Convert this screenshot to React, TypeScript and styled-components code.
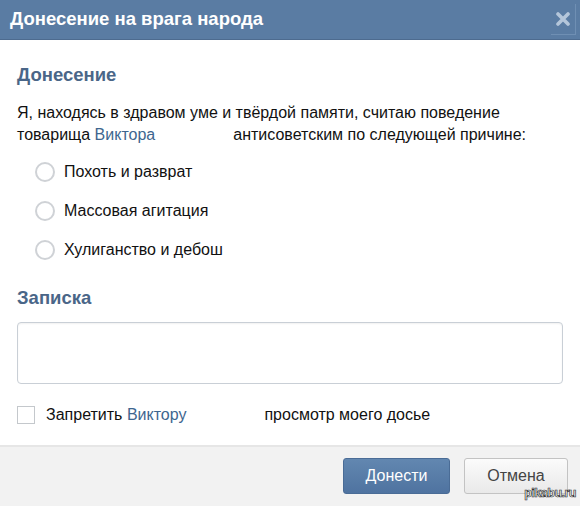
import React from "react";
import styled, { createGlobalStyle } from "styled-components";

const Global = createGlobalStyle`
  html, body { margin: 0; padding: 0; background: #fff; }
  body { font-family: "Liberation Sans", Arial, sans-serif; }
`;

const Dialog = styled.div`
  position: relative;
  width: 580px;
  height: 506px;
  display: flex;
  flex-direction: column;
  background: #fff;
  overflow: hidden;
`;

const Header = styled.div`
  height: 40px;
  box-sizing: border-box;
  background: #5a7ca3;
  border-bottom: 1px solid #4d6b8f;
  display: flex;
  align-items: center;
  justify-content: space-between;
  padding: 0 10px 2px 10px;
`;

const Title = styled.div`
  color: #fff;
  font-size: 18.5px;
  font-weight: bold;
`;

const Close = styled.div`
  width: 24px;
  height: 30px;
  display: flex;
  align-items: center;
  justify-content: center;
  border-bottom: 1px solid #6f8fb3;
  border-right: 1px solid #6f8fb3;
  margin-right: -6px;
  margin-top: 2px;
`;

const Body = styled.div`
  flex: 1;
  padding: 24px 17px 0 17px;
  display: flex;
  flex-direction: column;
`;

const Heading = styled.div<{ $mt?: number }>`
  color: #4a6688;
  font-size: 18.5px;
  font-weight: bold;
  margin-top: ${(p) => p.$mt ?? 0}px;
`;

const Paragraph = styled.div`
  margin-top: 16px;
  font-size: 16px;
  line-height: 22px;
  color: #111;
`;

const Link = styled.span`
  color: #3e668f;
`;

const Redacted = styled.span<{ $w: number }>`
  display: inline-block;
  width: ${(p) => p.$w}px;
`;

const Options = styled.div`
  margin-top: 15px;
  padding-left: 18px;
  display: flex;
  flex-direction: column;
  gap: 17px;
`;

const Option = styled.label`
  display: flex;
  align-items: center;
  gap: 9px;
  font-size: 16px;
  color: #111;
  height: 22px;
`;

const Radio = styled.span`
  width: 20px;
  height: 20px;
  border-radius: 50%;
  border: 2px solid #cfd2d6;
  box-sizing: border-box;
  background: #fff;
`;

const TextArea = styled.div`
  margin-top: 13px;
  height: 62px;
  border: 1px solid #c9cfd6;
  border-radius: 4px;
  box-sizing: border-box;
  box-shadow: inset 0 1px 2px rgba(0,0,0,0.06);
`;

const CheckRow = styled.label`
  margin-top: 22px;
  display: flex;
  align-items: center;
  gap: 11px;
  font-size: 16px;
  color: #111;
`;

const Checkbox = styled.span`
  width: 18px;
  height: 18px;
  border: 1px solid #c4c8cc;
  box-sizing: border-box;
  background: #fff;
`;

const Footer = styled.div`
  height: 61px;
  box-sizing: border-box;
  background: #f2f2f2;
  border-top: 2px solid #e6e6e6;
  display: flex;
  align-items: center;
  justify-content: flex-end;
  gap: 14px;
  padding: 0 12px 2px 0;
`;

const Button = styled.div<{ $primary?: boolean }>`
  height: 36px;
  box-sizing: border-box;
  width: ${(p) => (p.$primary ? 107 : 104)}px;
  display: flex;
  align-items: center;
  justify-content: center;
  font-size: 16px;
  border-radius: 3px;
  color: ${(p) => (p.$primary ? "#fff" : "#444")};
  background: ${(p) =>
    p.$primary
      ? "linear-gradient(#6287b0, #4f73a0)"
      : "linear-gradient(#fbfbfb, #e9e9e9)"};
  border: 1px solid ${(p) => (p.$primary ? "#4a6c96" : "#c3c3c3")};
`;

const Watermark = styled.div`
  position: absolute;
  right: 4px;
  bottom: 6px;
  font-family: "Liberation Sans", Arial, sans-serif;
  font-size: 12.5px;
  font-weight: bold;
  color: #fff;
  -webkit-text-stroke: 0.7px #333;
  letter-spacing: -0.5px;
`;

export default function App() {
  return (
    <>
      <Global />
      <Dialog>
        <Header>
          <Title>Донесение на врага народа</Title>
          <Close>
            <svg width="14" height="14" viewBox="0 0 14 14">
              <path d="M2 2 L12 12 M12 2 L2 12" stroke="#b4c6da" strokeWidth="3.6" strokeLinecap="round" />
            </svg>
          </Close>
        </Header>
        <Body>
          <Heading>Донесение</Heading>
          <Paragraph>
            Я, находясь в здравом уме и твёрдой памяти, считаю поведение
            <br />
            товарища <Link>Виктора</Link>
            <Redacted $w={78} />
            антисоветским по следующей причине:
          </Paragraph>
          <Options>
            <Option><Radio />Похоть и разврат</Option>
            <Option><Radio />Массовая агитация</Option>
            <Option><Radio />Хулиганство и дебош</Option>
          </Options>
          <Heading $mt={26}>Записка</Heading>
          <TextArea />
          <CheckRow>
            <Checkbox />
            <span>
              Запретить <Link>Виктору</Link>
              <Redacted $w={78} />
              просмотр моего досье
            </span>
          </CheckRow>
        </Body>
        <Footer>
          <Button $primary>Донести</Button>
          <Button>Отмена</Button>
        </Footer>
        <Watermark>pikabu.ru</Watermark>
      </Dialog>
    </>
  );
}
